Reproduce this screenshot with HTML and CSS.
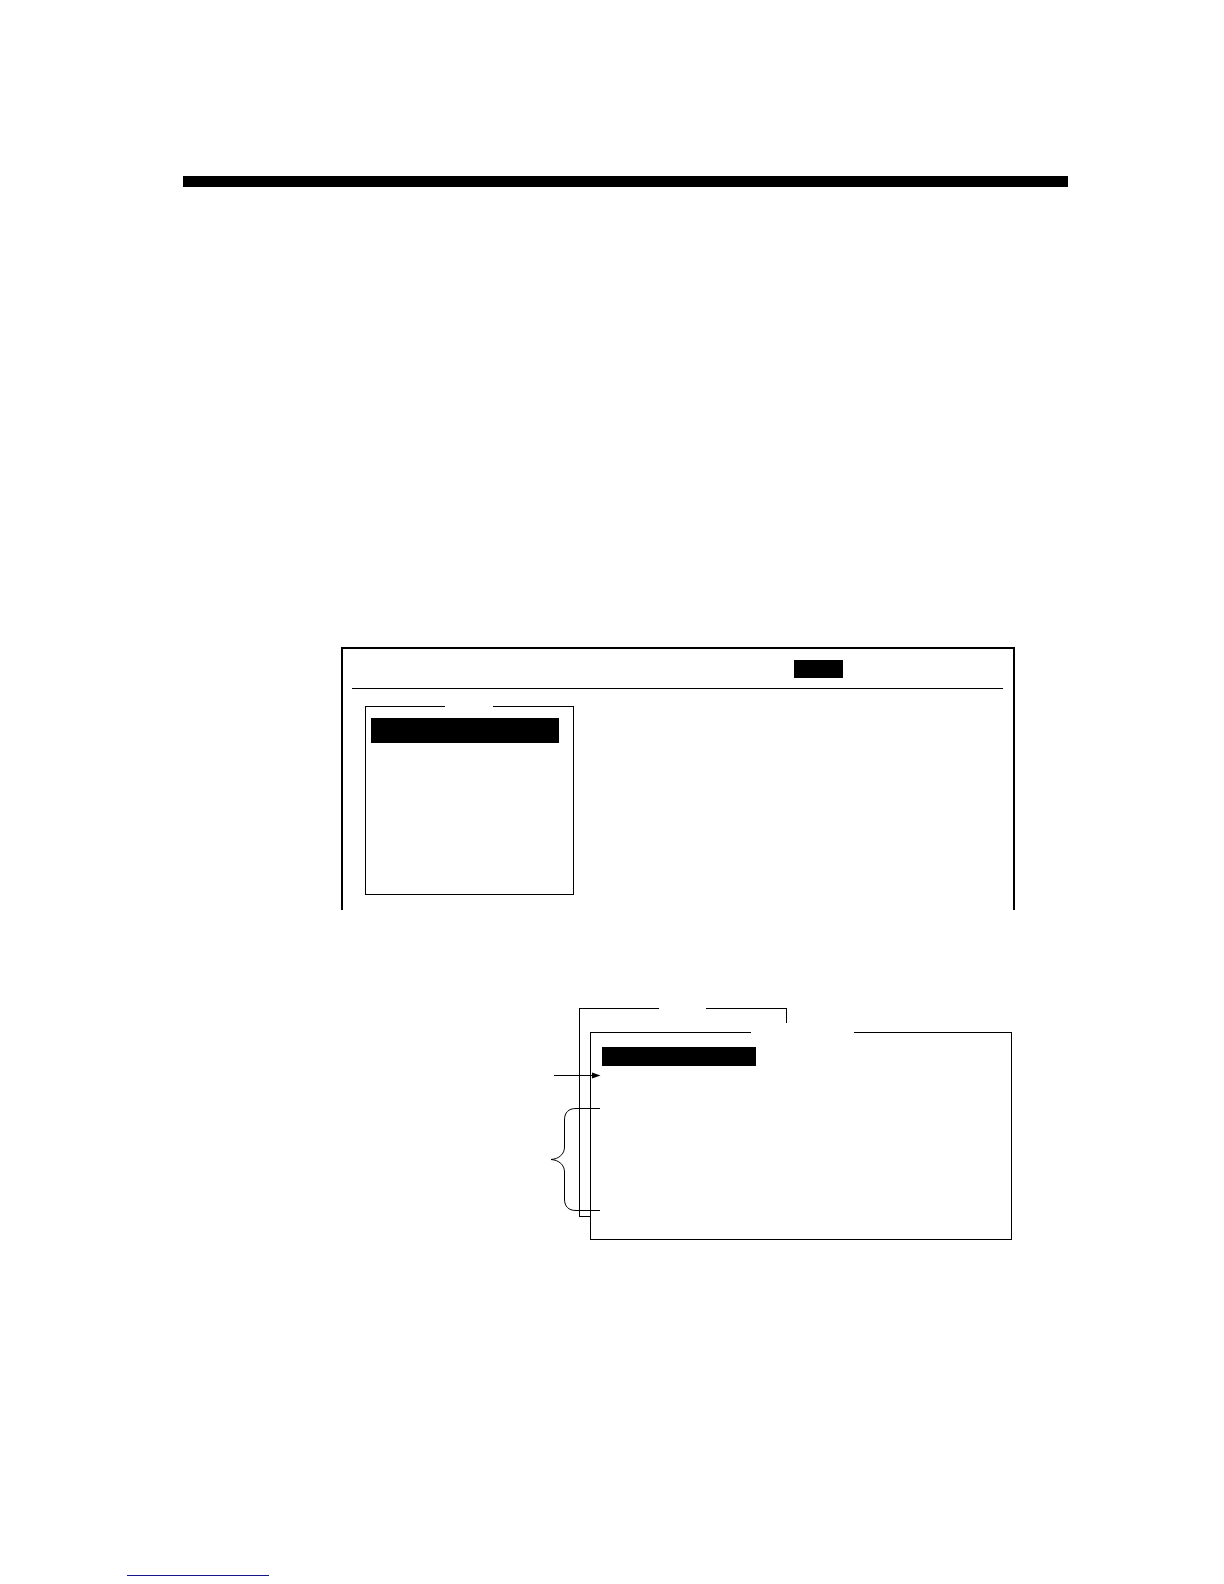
FILE: index.html
```html
<!DOCTYPE html>
<html lang="en">
<head>
<meta charset="utf-8">
<title>Manual page</title>
<link rel="stylesheet" href="styles.css">
</head>
<body>
<main class="page">
  <hr class="rule">

  <figure class="screen">
    <div class="screen-bar"><span class="badge"></span></div>
    <div class="menu">
      <div class="edge">
        <span class="edge-stub"></span>
        <span class="edge-line"></span>
      </div>
      <div class="menu-body"><div class="menu-selected"></div></div>
    </div>
  </figure>

  <figure class="windows">
    <div class="back">
      <div class="edge back-top">
        <span class="edge-stub"></span>
        <span class="edge-line"></span>
      </div>
      <div class="back-side"></div>
    </div>
    <div class="front">
      <div class="edge front-edge">
        <span class="edge-stub"></span>
        <span class="edge-line"></span>
      </div>
      <div class="front-body"><div class="front-selected"></div></div>
    </div>
    <svg class="callouts" width="50" height="232" viewBox="0 0 50 232" fill="none" stroke="#000" aria-hidden="true">
      <path d="M3 67.5H42"/>
      <path d="M41 64.500L49.500 67.500L41 70.500Z" fill="#000" stroke="none"/>
      <path d="M49 100.500H25C17.500 100.500 13.500 104.500 13.500 112V139C13.500 146 8 151 0 151.500C8 152 13.500 157 13.500 164V191C13.500 198.500 17.500 202.500 25 202.500H49"/>
    </svg>
  </figure>
</main>
<footer class="footer"><a class="footer-link" href="#"></a></footer>
</body>
</html>
```

FILE: styles.css
```css
* {
  box-sizing: border-box;
}

body {
  margin: 0;
  background: #fff;
  font-family: "Liberation Sans", sans-serif;
}

.page {
  padding: 176px 156px 0 183px;
}

.rule {
  height: 11px;
  margin: 0;
  border: 0;
  background: #000;
}

/* Screen with its lower part cut away */
.screen {
  margin: 460px 53px 0 158px;
  padding-bottom: 15px;
  border: 2px solid #000;
  border-bottom: 0;
}

.screen-bar {
  display: flex;
  justify-content: flex-end;
  margin: 0 10px 0 9px;
  padding: 11px 160px 10px 0;
  border-bottom: 1px solid #000;
}

.badge {
  width: 49px;
  height: 18px;
  background: #000;
}

/* Top edge of a window, broken where its title goes */
.edge {
  display: flex;
  gap: 48px;
}

.edge-stub {
  width: 80px;
  border-top: 1px solid #000;
}

.edge-line {
  flex: 1;
  border-top: 1px solid #000;
}

.menu {
  width: 209px;
  margin: 17px 0 0 22px;
}

.menu-body {
  padding: 11px 14px 151px 5px;
  border: 1px solid #000;
  border-top: 0;
}

.menu-selected {
  height: 25px;
  background: #000;
}

/* Two overlapping windows with callouts */
.windows {
  position: relative;
  margin: 98px 56px 0 368px;
  padding: 24px 0 0 39px;
}

.back {
  position: absolute;
  top: 0;
  left: 28px;
  width: 208px;
}

.back-top {
  gap: 47px;
  height: 15px;
  border-right: 1px solid #000;
}

.back-side {
  width: 12px;
  height: 194px;
  border: solid #000;
  border-width: 0 0 1px 1px;
}

.back-top .edge-stub {
  border-left: 1px solid #000;
}

.front-edge {
  gap: 103px;
}

.front-edge .edge-stub {
  width: 161px;
}

.front-body {
  padding: 14px 11px 173px;
  border: 1px solid #000;
  border-top: 0;
}

.front-selected {
  width: 154px;
  height: 19px;
  background: #000;
}

.callouts {
  position: absolute;
  top: 0;
  left: 0;
}

.footer {
  padding: 335px 127px 8px;
}

.footer-link {
  display: block;
  width: 142px;
  border-bottom: 1px solid #15158a;
}
```
